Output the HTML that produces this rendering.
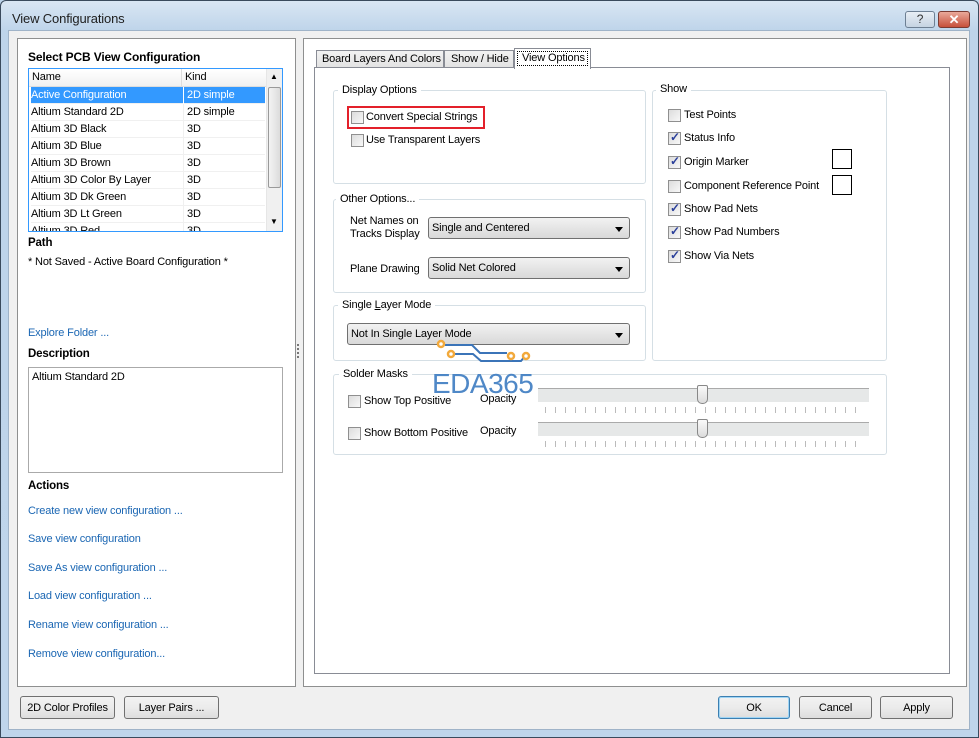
<!DOCTYPE html>
<html><head><style>
*{margin:0;padding:0;box-sizing:border-box}
body{width:979px;height:738px;overflow:hidden;background:#bcd3ea;font-family:"Liberation Sans",sans-serif;font-size:11px;letter-spacing:-0.15px;color:#000;position:relative;white-space:nowrap}
.a{position:absolute}
.win{left:0;top:0;width:979px;height:738px;border:1px solid #3a4a5c;border-radius:6px 6px 0 0;background:linear-gradient(#d9e6f3,#bed4ea 30px,#bfd5eb)}
.client{left:8px;top:30px;width:962px;height:700px;background:#f0f0f0;border:1px solid #9fb3c8}
.panel{background:#fff;border:1px solid #8e8f8f}
.grp{border:1px solid #d5dfe5;border-radius:3px}
.lg{background:#fff;padding:0 4px}
.cb{width:13px;height:13px;border:1px solid #8f8f8f;background:linear-gradient(135deg,#dcdcdc,#f8f8f8);}
.ck::after{content:"✓";position:absolute;left:1px;top:-3px;font-size:12px;color:#2a3f9a;font-weight:bold}
.dd{height:22px;border:1px solid #707070;border-radius:3px;background:linear-gradient(#f2f2f2,#e5e5e5 50%,#d9d9d9);padding:4px 3px;}
.dd::after{content:"";position:absolute;right:6px;top:9px;border:4px solid transparent;border-top:5px solid #000}
.btn{border:1px solid #707070;border-radius:3px;background:linear-gradient(#f2f2f2,#ebebeb 50%,#dddddd);text-align:center;line-height:22px}
.link{color:#1a66b3}
.row{height:17px;line-height:17px;border-bottom:1px solid #f0f0f0;}
.row span{position:absolute;left:156px;border-left:1px solid #f0f0f0;padding-left:3px}
.tk{height:6px;background:repeating-linear-gradient(90deg,#bbb 0 1px,transparent 1px 10px)}
</style></head><body>
<div class="a win"></div>
<div class="a" style="left:12px;top:11px;font-size:13px;color:#1e1e1e">View Configurations</div>
<div class="a" style="left:905px;top:11px;width:30px;height:17px;border:1px solid #6d7f93;border-radius:3px;background:linear-gradient(#e8eef5,#c5d3e2);text-align:center;font-size:12px;line-height:15px;color:#333">?</div>
<div class="a" style="left:938px;top:11px;width:32px;height:17px;border:1px solid #7a3b33;border-radius:3px;background:linear-gradient(#e9a99a,#c7503b);text-align:center;font-size:13px;line-height:15px;color:#fff;font-weight:bold">✕</div>
<div class="a client"></div>

<div class="a panel" style="left:17px;top:38px;width:279px;height:649px"></div>
<div class="a" style="left:28px;top:50px;font-weight:bold;font-size:12px">Select PCB View Configuration</div>
<div class="a" style="left:28px;top:68px;width:255px;height:164px;border:1px solid #3399ff;background:#fff;overflow:hidden">
 <div style="height:18px;background:linear-gradient(#fff,#f1f1f1);border-bottom:1px solid #ddd;line-height:17px;padding-left:3px;position:relative">Name<span style="position:absolute;left:152px;border-left:1px solid #ddd;padding-left:3px">Kind</span></div>
 <div style="position:relative;width:236px;padding-left:2px">
 <div class="row" style="background:#3399ff;color:#fff;position:relative">Active Configuration<span style="left:152px;border-color:#fff">2D simple</span></div>
 <div class="row" style="position:relative">Altium Standard 2D<span style="left:152px">2D simple</span></div>
 <div class="row" style="position:relative">Altium 3D Black<span style="left:152px">3D</span></div>
 <div class="row" style="position:relative">Altium 3D Blue<span style="left:152px">3D</span></div>
 <div class="row" style="position:relative">Altium 3D Brown<span style="left:152px">3D</span></div>
 <div class="row" style="position:relative">Altium 3D Color By Layer<span style="left:152px">3D</span></div>
 <div class="row" style="position:relative">Altium 3D Dk Green<span style="left:152px">3D</span></div>
 <div class="row" style="position:relative">Altium 3D Lt Green<span style="left:152px">3D</span></div>
 <div class="row" style="position:relative">Altium 3D Red<span style="left:152px">3D</span></div>
 </div>
 <div class="a" style="left:237px;top:0;width:17px;height:162px;background:#f0f0f0;border-left:1px solid #e6e6e6"></div>
 <div class="a" style="left:239px;top:18px;width:13px;height:101px;border:1px solid #9a9a9a;border-radius:2px;background:linear-gradient(90deg,#f3f3f3,#dcdcdc)"></div>
 <div class="a" style="left:241px;top:3px;font-size:8px">▲</div>
 <div class="a" style="left:241px;top:148px;font-size:8px">▼</div>
</div>
<div class="a" style="left:28px;top:237px;font-weight:bold;font-size:11.5px">Path</div>
<div class="a" style="left:28px;top:256px">* Not Saved - Active Board Configuration *</div>
<div class="a link" style="left:28px;top:327px">Explore Folder ...</div>
<div class="a" style="left:28px;top:348px;font-weight:bold;font-size:11.5px">Description</div>
<div class="a" style="left:28px;top:367px;width:255px;height:106px;border:1px solid #aaa;padding:3px">Altium Standard 2D</div>
<div class="a" style="left:28px;top:480px;font-weight:bold;font-size:11.5px">Actions</div>
<div class="a link" style="left:28px;top:505px">Create new view configuration ...</div>
<div class="a link" style="left:28px;top:533px">Save view configuration</div>
<div class="a link" style="left:28px;top:562px">Save As view configuration ...</div>
<div class="a link" style="left:28px;top:590px">Load view configuration ...</div>
<div class="a link" style="left:28px;top:619px">Rename view configuration ...</div>
<div class="a link" style="left:28px;top:648px">Remove view configuration...</div>
<div class="a" style="left:297px;top:344px;width:2px;height:14px;border-left:2px dotted #777"></div>

<div class="a panel" style="left:303px;top:38px;width:664px;height:649px"></div>
<div class="a" style="left:314px;top:67px;width:636px;height:607px;border:1px solid #898c95;background:#fff"></div>
<div class="a" style="left:316px;top:50px;width:128px;height:18px;border:1px solid #898c95;background:linear-gradient(#f2f2f2,#e3e3e3);padding-left:5px;line-height:16px">Board Layers And Colors</div>
<div class="a" style="left:444px;top:50px;width:70px;height:18px;border:1px solid #898c95;background:linear-gradient(#f2f2f2,#e3e3e3);padding-left:6px;line-height:16px">Show / Hide</div>
<div class="a" style="left:514px;top:48px;width:77px;height:21px;border:1px solid #898c95;border-bottom:none;background:#fff;padding:2px 2px 0"><div style="border:1px dotted #000;line-height:13px;padding-left:4px">View Options</div></div>

<div class="a grp" style="left:333px;top:90px;width:313px;height:94px"></div>
<div class="a lg" style="left:338px;top:84px">Display Options</div>
<div class="a" style="left:347px;top:106px;width:138px;height:23px;border:2px solid #e3202a"></div>
<div class="a cb" style="left:351px;top:111px"></div><div class="a" style="left:366px;top:111px">Convert Special Strings</div>
<div class="a cb" style="left:351px;top:134px"></div><div class="a" style="left:366px;top:134px">Use Transparent Layers</div>

<div class="a grp" style="left:333px;top:199px;width:313px;height:94px"></div>
<div class="a lg" style="left:336px;top:193px">Other Options...</div>
<div class="a" style="left:350px;top:215px;line-height:13px">Net Names on<br>Tracks Display</div>
<div class="a dd" style="left:428px;top:217px;width:202px">Single and Centered</div>
<div class="a" style="left:350px;top:263px">Plane Drawing</div>
<div class="a dd" style="left:428px;top:257px;width:202px">Solid Net Colored</div>

<div class="a grp" style="left:333px;top:305px;width:313px;height:56px"></div>
<div class="a lg" style="left:338px;top:299px">Single <u>L</u>ayer Mode</div>
<div class="a dd" style="left:347px;top:323px;width:283px">Not In Single Layer Mode</div>

<div class="a grp" style="left:652px;top:90px;width:235px;height:271px"></div>
<div class="a lg" style="left:656px;top:83px">Show</div>
<div class="a cb" style="left:668px;top:109px"></div><div class="a" style="left:684px;top:109px">Test Points</div>
<div class="a cb ck" style="left:668px;top:132px"></div><div class="a" style="left:684px;top:132px">Status Info</div>
<div class="a cb ck" style="left:668px;top:156px"></div><div class="a" style="left:684px;top:156px">Origin Marker</div>
<div class="a cb" style="left:668px;top:180px"></div><div class="a" style="left:684px;top:180px">Component Reference Point</div>
<div class="a cb ck" style="left:668px;top:203px"></div><div class="a" style="left:684px;top:203px">Show Pad Nets</div>
<div class="a cb ck" style="left:668px;top:226px"></div><div class="a" style="left:684px;top:226px">Show Pad Numbers</div>
<div class="a cb ck" style="left:668px;top:250px"></div><div class="a" style="left:684px;top:250px">Show Via Nets</div>
<div class="a" style="left:832px;top:149px;width:20px;height:20px;border:1px solid #000;background:#fff"></div>
<div class="a" style="left:832px;top:175px;width:20px;height:20px;border:1px solid #000;background:#fff"></div>

<div class="a grp" style="left:333px;top:374px;width:554px;height:81px"></div>
<div class="a lg" style="left:339px;top:368px">Solder Masks</div>
<div class="a cb" style="left:348px;top:395px"></div><div class="a" style="left:364px;top:395px">Show Top Positive</div>
<div class="a cb" style="left:348px;top:427px"></div><div class="a" style="left:364px;top:427px">Show Bottom Positive</div>
<div class="a" style="left:480px;top:393px">Opacity</div>
<div class="a" style="left:480px;top:425px">Opacity</div>
<div class="a" style="left:538px;top:388px;width:331px;height:14px;background:#e6e8e8;border-top:1px solid #aaa"></div>
<div class="a tk" style="left:545px;top:407px;width:318px"></div>
<div class="a" style="left:538px;top:422px;width:331px;height:14px;background:#e6e8e8;border-top:1px solid #aaa"></div>
<div class="a tk" style="left:545px;top:441px;width:318px"></div>
<div class="a" style="left:697px;top:385px;width:11px;height:19px;border:1px solid #888;border-radius:2px 2px 5px 5px;background:linear-gradient(#fafafa,#dcdcdc)"></div>
<div class="a" style="left:697px;top:419px;width:11px;height:19px;border:1px solid #888;border-radius:2px 2px 5px 5px;background:linear-gradient(#fafafa,#dcdcdc)"></div>

<svg class="a" style="left:435px;top:338px" width="100" height="26" viewBox="0 0 100 26">
<path d="M10 7 H37 L45 15 H72" stroke="#3b74b8" stroke-width="2" fill="none"/>
<path d="M19 16 H38 L46 23 H86 L90 18" stroke="#3b74b8" stroke-width="2" fill="none"/>
<g fill="#fff" stroke="#f2a93b" stroke-width="2.5"><circle cx="6" cy="6" r="3"/><circle cx="16" cy="16" r="3"/><circle cx="76" cy="18" r="3"/><circle cx="91" cy="18" r="3"/></g>
</svg>
<div class="a" style="left:432px;top:368px;font-size:28px;color:#3d7cc2;opacity:.9;letter-spacing:-0.5px">EDA365</div>

<div class="a btn" style="left:20px;top:696px;width:95px;height:23px">2D Color Profiles</div>
<div class="a btn" style="left:124px;top:696px;width:95px;height:23px">Layer Pairs ...</div>
<div class="a btn" style="left:718px;top:696px;width:72px;height:23px;border-color:#3c7fb1;box-shadow:inset 0 0 0 1px #9fd5f5">OK</div>
<div class="a btn" style="left:799px;top:696px;width:73px;height:23px">Cancel</div>
<div class="a btn" style="left:880px;top:696px;width:73px;height:23px">Apply</div>
</body></html>
